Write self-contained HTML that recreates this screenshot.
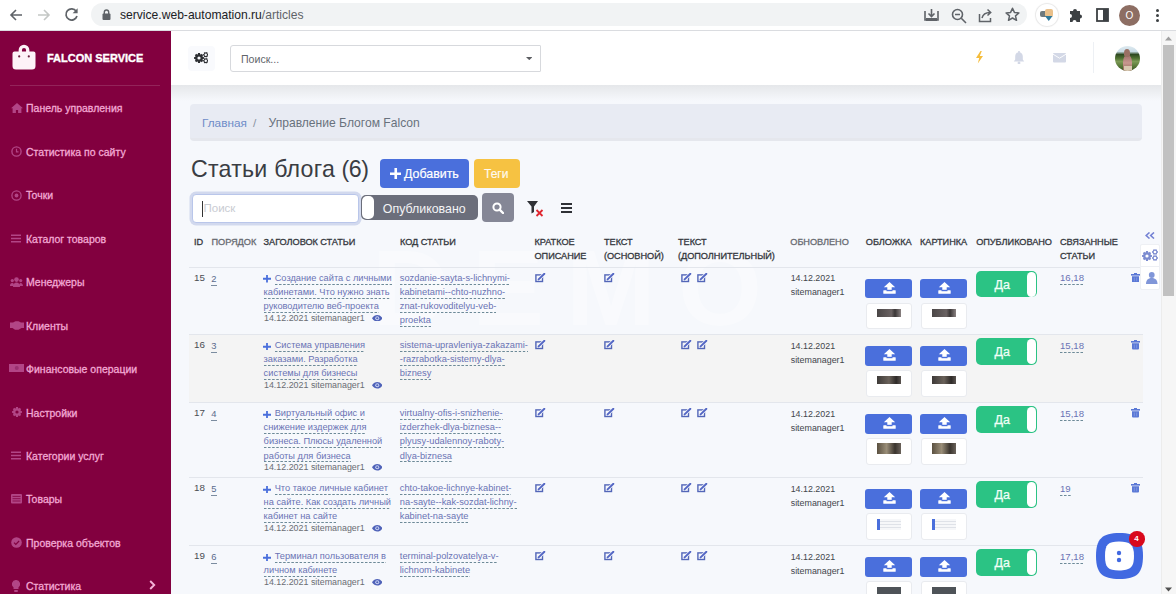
<!DOCTYPE html><html><head><meta charset="utf-8"><style>
*{box-sizing:border-box;margin:0;padding:0}
html,body{width:1176px;height:594px;overflow:hidden;background:#f6f8fc;font-family:"Liberation Sans",sans-serif;position:relative}
.a{position:absolute}
.t{position:absolute;white-space:nowrap}
</style></head><body>
<div class="a" style="left:0px;top:0px;width:1176px;height:31px;background:#fff;border-bottom:1px solid #dadce0"></div>
<div class="a" style="left:91px;top:3px;width:936px;height:23px;background:#f1f3f4;border-radius:12px"></div>
<svg class="a" style="left:9px;top:8px;" width="14" height="14" viewBox="0 0 14 14"><path d="M13 7H2.5M7 2L2 7l5 5" fill="none" stroke="#5f6368" stroke-width="1.6"/></svg>
<svg class="a" style="left:37px;top:8px;" width="14" height="14" viewBox="0 0 14 14"><path d="M1 7h10.5M7 2l5 5-5 5" fill="none" stroke="#c4c7c5" stroke-width="1.6"/></svg>
<svg class="a" style="left:64px;top:7px;" width="15" height="15" viewBox="0 0 15 15"><path d="M12.2 4.2A5.6 5.6 0 1 0 13 9" fill="none" stroke="#5f6368" stroke-width="1.7"/><path d="M13.6 1.2v5h-5z" fill="#5f6368"/></svg>
<svg class="a" style="left:102px;top:9px;" width="9" height="11" viewBox="0 0 9 11"><rect x="0.5" y="4.5" width="8" height="6.5" rx="1" fill="#5f6368"/><path d="M2.3 5V3.2a2.2 2.2 0 0 1 4.4 0V5" fill="none" stroke="#5f6368" stroke-width="1.4"/></svg>
<div class="t" style="left:120px;top:7.55px;font-size:12.1px;line-height:14.52px;color:#202124;font-weight:400;">service.web-automation.ru<span style="color:#5f6368">/articles</span></div>
<svg class="a" style="left:923px;top:8px;" width="17" height="15" viewBox="0 0 17 15"><path d="M2 3v9h13V3" fill="none" stroke="#5f6368" stroke-width="1.6"/><path d="M8.5 1v7M5.5 5.5l3 3 3-3" fill="none" stroke="#5f6368" stroke-width="1.6"/><rect x="3" y="10" width="11" height="3" fill="#5f6368"/></svg>
<svg class="a" style="left:951px;top:8px;" width="16" height="16" viewBox="0 0 16 16"><circle cx="6.5" cy="6.5" r="5" fill="none" stroke="#5f6368" stroke-width="1.6"/><path d="M4 6.5h5M10.3 10.3L15 15" stroke="#5f6368" stroke-width="1.6"/></svg>
<svg class="a" style="left:978px;top:8px;" width="15" height="15" viewBox="0 0 15 15"><path d="M1.5 6v7.5h11V10" fill="none" stroke="#5f6368" stroke-width="1.5"/><path d="M4 10c1-4 4-5.5 8-5.5M9.5 1.5l3.2 3-3.2 3" fill="none" stroke="#5f6368" stroke-width="1.5"/></svg>
<svg class="a" style="left:1005px;top:7px;" width="15" height="15" viewBox="0 0 15 15"><path d="M7.5 1.3l1.9 4.1 4.5.5-3.4 3 1 4.4-4-2.3-4 2.3 1-4.4-3.4-3 4.5-.5z" fill="none" stroke="#5f6368" stroke-width="1.5" stroke-linejoin="round"/></svg>
<div class="a" style="left:1036px;top:4px;width:22px;height:22px;background:#fff;border-radius:50%;box-shadow:0 0 1px 1px #e8e8e8"></div>
<div class="a" style="left:1040px;top:10.5px;width:8px;height:6.5px;background:#6e7a7e;border-radius:2px"></div>
<div class="a" style="left:1045px;top:9px;width:7.5px;height:7.5px;background:#e9c08a;border-radius:2px"></div>
<svg class="a" style="left:1045px;top:16px;" width="7.5" height="5" viewBox="0 0 7.5 5"><path d="M0 0h7.5L3.75 5z" fill="#2f7a9c"/></svg>
<svg class="a" style="left:1067px;top:7px;" width="16" height="16" viewBox="0 0 16 16"><path d="M3 4h3a2 2 0 0 1 4 0h3v3.5a2 2 0 0 1 0 4V15H9.5a2 2 0 0 0-4 0H3V11a2 2 0 0 0 0-4z" fill="#3c4043"/></svg>
<svg class="a" style="left:1096px;top:8px;" width="13" height="14" viewBox="0 0 13 14"><rect x="1" y="1" width="11" height="12" fill="none" stroke="#3c4043" stroke-width="1.8"/><rect x="7" y="1" width="5" height="12" fill="#3c4043"/></svg>
<div class="a" style="left:1119px;top:5px;width:21px;height:21px;background:#8d6e63;border-radius:50%"></div>
<div class="t" style="left:1125.5px;top:10.04px;font-size:10px;line-height:12.0px;color:#fff;font-weight:400;">O</div>
<div class="a" style="left:1156px;top:9px;width:3px;height:3px;background:#3c4043;border-radius:50%"></div>
<div class="a" style="left:1156px;top:14px;width:3px;height:3px;background:#3c4043;border-radius:50%"></div>
<div class="a" style="left:1156px;top:19px;width:3px;height:3px;background:#3c4043;border-radius:50%"></div>
<div class="a" style="left:0px;top:31px;width:171px;height:563px;background:#82003f"></div>
<svg class="a" style="left:12px;top:43px;" width="24" height="28" viewBox="0 0 24 28"><path d="M8.3 10V7a3.7 3.7 0 0 1 7.4 0v3" fill="none" stroke="#fdf2f8" stroke-width="3.3"/><path d="M2.5 8.5h19a2 2 0 0 1 2 2V23a3.5 3.5 0 0 1-3.5 3.5H4A3.5 3.5 0 0 1 .5 23V10.5a2 2 0 0 1 2-2z" fill="#fdf2f8"/><circle cx="7.2" cy="13.4" r="1.1" fill="#6a2040"/><circle cx="16.8" cy="13.4" r="1.1" fill="#6a2040"/></svg>
<div class="t" style="left:47px;top:51.59px;font-size:11px;line-height:13.2px;color:#fff;font-weight:700;letter-spacing:0px;-webkit-text-stroke:0.35px #fff">FALCON SERVICE</div>
<div class="a" style="left:10px;top:85px;width:150px;height:1px;background:rgba(255,255,255,0.14)"></div>
<div class="t" style="left:26px;top:102.16px;font-size:10.5px;line-height:12.6px;color:#f2a8d3;font-weight:400;-webkit-text-stroke:0.3px #f2a8d3">Панель управления</div>
<svg class="a" style="left:10.5px;top:102.6px;" width="12" height="10" viewBox="0 0 12 10"><path d="M6 0L0 5.2h1.6V10h3.3V7h2.2v3h3.3V5.2H12z" fill="#b24586"/></svg>
<div class="t" style="left:26px;top:145.64px;font-size:10.5px;line-height:12.6px;color:#f2a8d3;font-weight:400;-webkit-text-stroke:0.3px #f2a8d3">Статистика по сайту</div>
<svg class="a" style="left:10.5px;top:146.07999999999998px;" width="11" height="11" viewBox="0 0 11 11"><circle cx="5.5" cy="5.5" r="4.6" fill="none" stroke="#b24586" stroke-width="1.4"/><path d="M5.5 2.8v3h2" fill="none" stroke="#b24586" stroke-width="1.2"/></svg>
<div class="t" style="left:26px;top:189.12px;font-size:10.5px;line-height:12.6px;color:#f2a8d3;font-weight:400;-webkit-text-stroke:0.3px #f2a8d3">Точки</div>
<svg class="a" style="left:10.5px;top:189.56px;" width="11" height="11" viewBox="0 0 11 11"><circle cx="5.5" cy="5.5" r="4.6" fill="none" stroke="#b24586" stroke-width="1.3"/><circle cx="5.5" cy="5.5" r="1.9" fill="#b24586"/></svg>
<div class="t" style="left:26px;top:232.60px;font-size:10.5px;line-height:12.6px;color:#f2a8d3;font-weight:400;-webkit-text-stroke:0.3px #f2a8d3">Каталог товаров</div>
<svg class="a" style="left:10.5px;top:234.04px;" width="10" height="9" viewBox="0 0 10 9"><path d="M0 1.2h10M0 4.5h10M0 7.8h10" stroke="#b24586" stroke-width="1.6"/></svg>
<div class="t" style="left:26px;top:276.08px;font-size:10.5px;line-height:12.6px;color:#f2a8d3;font-weight:400;-webkit-text-stroke:0.3px #f2a8d3">Менеджеры</div>
<svg class="a" style="left:10.2px;top:276.71999999999997px;" width="13" height="10" viewBox="0 0 13 10"><circle cx="6.5" cy="2.6" r="2.3" fill="#b24586"/><circle cx="2.3" cy="3.6" r="1.6" fill="#b24586"/><circle cx="10.7" cy="3.6" r="1.6" fill="#b24586"/><path d="M3 10c0-3 1.5-4.5 3.5-4.5S10 7 10 10z" fill="#b24586"/><path d="M0 9c0-2 .8-3 2.3-3S4 7 4 9zM9 9c0-2 .8-3 1.7-3s2.3 1 2.3 3z" fill="#b24586"/></svg>
<div class="t" style="left:26px;top:319.56px;font-size:10.5px;line-height:12.6px;color:#f2a8d3;font-weight:400;-webkit-text-stroke:0.3px #f2a8d3">Клиенты</div>
<svg class="a" style="left:9.5px;top:320.5px;" width="14" height="9" viewBox="0 0 14 9"><path d="M0 1.5h3l2.5-1.2h3L11 1.5h3V7h-2.5L8.5 8.8 5 8.8 2.5 7H0z" fill="#b24586"/></svg>
<div class="t" style="left:26px;top:363.04px;font-size:10.5px;line-height:12.6px;color:#f2a8d3;font-weight:400;-webkit-text-stroke:0.3px #f2a8d3">Финансовые операции</div>
<svg class="a" style="left:8.5px;top:363.98px;" width="15.5" height="8" viewBox="0 0 15.5 8"><rect x="0" y="0" width="15.5" height="8" fill="#b24586"/><circle cx="7.75" cy="4" r="2" fill="#9a3070"/></svg>
<div class="t" style="left:26px;top:406.52px;font-size:10.5px;line-height:12.6px;color:#f2a8d3;font-weight:400;-webkit-text-stroke:0.3px #f2a8d3">Настройки</div>
<svg class="a" style="left:11.5px;top:406.9599999999999px;" width="10" height="10" viewBox="0 0 10 10"><path d="M9.90 3.99L9.90 6.01L8.84 6.12L8.51 6.93L9.18 7.75L7.75 9.18L6.93 8.51L6.12 8.84L6.01 9.90L3.99 9.90L3.88 8.84L3.07 8.51L2.25 9.18L0.82 7.75L1.49 6.93L1.16 6.12L0.10 6.01L0.10 3.99L1.16 3.88L1.49 3.07L0.82 2.25L2.25 0.82L3.07 1.49L3.88 1.16L3.99 0.10L6.01 0.10L6.12 1.16L6.93 1.49L7.75 0.82L9.18 2.25L8.51 3.07L8.84 3.88z" fill="#b24586"/><circle cx="5.0" cy="5.0" r="1.60" fill="#82003f"/></svg>
<div class="t" style="left:26px;top:450.00px;font-size:10.5px;line-height:12.6px;color:#f2a8d3;font-weight:400;-webkit-text-stroke:0.3px #f2a8d3">Категории услуг</div>
<svg class="a" style="left:10.5px;top:451.43999999999994px;" width="10" height="9" viewBox="0 0 10 9"><path d="M0 1.2h10M0 4.5h10M0 7.8h10" stroke="#b24586" stroke-width="1.6"/></svg>
<div class="t" style="left:26px;top:493.48px;font-size:10.5px;line-height:12.6px;color:#f2a8d3;font-weight:400;-webkit-text-stroke:0.3px #f2a8d3">Товары</div>
<svg class="a" style="left:10.5px;top:494.41999999999996px;" width="11" height="9.5" viewBox="0 0 11 9.5"><rect x="0" y="0" width="11" height="9.5" rx="1" fill="#b24586"/><path d="M1.5 2.4h8M1.5 4.7h8M1.5 7h8" stroke="#82003f" stroke-width="0.8"/></svg>
<div class="t" style="left:26px;top:536.96px;font-size:10.5px;line-height:12.6px;color:#f2a8d3;font-weight:400;-webkit-text-stroke:0.3px #f2a8d3">Проверка объектов</div>
<svg class="a" style="left:10.5px;top:537.4px;" width="11" height="11" viewBox="0 0 11 11"><circle cx="5.5" cy="5.5" r="5.3" fill="#b24586"/><path d="M3 5.6l1.8 1.8 3.3-3.4" fill="none" stroke="#82003f" stroke-width="1.2"/></svg>
<div class="t" style="left:26px;top:580.44px;font-size:10.5px;line-height:12.6px;color:#f2a8d3;font-weight:400;-webkit-text-stroke:0.3px #f2a8d3">Статистика</div>
<svg class="a" style="left:12px;top:580.38px;" width="8" height="12" viewBox="0 0 8 12"><path d="M4 0a4 4 0 0 0-2.5 7.2V9h5V7.2A4 4 0 0 0 4 0z" fill="#b24586"/><rect x="2" y="10" width="4" height="2" rx="1" fill="#b24586"/></svg>
<svg class="a" style="left:149px;top:580px;" width="7" height="10" viewBox="0 0 7 10"><path d="M1.2 1l4 4-4 4" fill="none" stroke="#f4b3d8" stroke-width="1.9"/></svg>
<div class="a" style="left:171px;top:85px;width:990px;height:16px;background:linear-gradient(#e5e7ea,#eceef1 40%,#f6f8fc)"></div>
<div class="a" style="left:171px;top:31px;width:990px;height:54px;background:#fff"></div>
<div class="a" style="left:188px;top:46px;width:27px;height:25px;background:#f9fafd;border-radius:4px"></div>
<div class="a" style="left:230px;top:45px;width:311px;height:27px;background:#fff;border:1px solid #d7d9dd;border-radius:3px 1px 1px 3px"></div>
<div class="t" style="left:241px;top:52.77px;font-size:10.6px;line-height:12.72px;color:#62656b;font-weight:400;">Поиск...</div>
<svg class="a" style="left:525.5px;top:56.8px;" width="6.5" height="3.2" viewBox="0 0 6.5 3.2"><path d="M0 0h6.5L3.25 3.2z" fill="#5c5e62"/></svg>
<div class="a" style="left:1161px;top:31px;width:15px;height:563px;background:#f6f6f6;border-left:1px solid #ececec"></div>
<div class="a" style="left:1163px;top:45px;width:11px;height:251px;background:#c1c1c1"></div>
<svg class="a" style="left:1165px;top:36px;" width="7" height="5" viewBox="0 0 7 5"><path d="M0 4.5L3.5 .5 7 4.5z" fill="#a0a0a0"/></svg>
<svg class="a" style="left:1165px;top:587px;" width="7" height="5" viewBox="0 0 7 5"><path d="M0 .5L3.5 4.5 7 .5z" fill="#505050"/></svg>
<div class="a" style="left:190px;top:104px;width:952px;height:37px;background:#e8ebf3;border-bottom:3px solid #e5e7ed;border-radius:4px"></div>
<div class="t" style="left:202px;top:116.13px;font-size:11.8px;line-height:14.16px;color:#6e8bc8;font-weight:400;">Главная</div>
<div class="t" style="left:253px;top:116.13px;font-size:11.8px;line-height:14.16px;color:#8a94a2;font-weight:400;">/</div>
<div class="t" style="left:268.5px;top:115.85px;font-size:12.1px;line-height:14.52px;color:#68727d;font-weight:400;">Управление Блогом Falcon</div>
<div class="t" style="left:191px;top:156.44px;font-size:23.2px;line-height:27.84px;color:#3a3d43;font-weight:400;letter-spacing:0.22px">Статьи блога</div>
<div class="t" style="left:341.6px;top:156.44px;font-size:23.2px;line-height:27.84px;color:#3a3d43;font-weight:400;letter-spacing:-0.5px">(6)</div>
<div class="a" style="left:380px;top:158.5px;width:89px;height:29px;background:#4a6fdc;border-radius:4px"></div>
<div class="t" style="left:404px;top:166.96px;font-size:12.4px;line-height:14.88px;color:#fff;font-weight:400;-webkit-text-stroke:0.2px #fff">Добавить</div>
<div class="a" style="left:473.5px;top:158.5px;width:46px;height:29px;background:#f6c242;border-radius:4px"></div>
<div class="t" style="left:484px;top:166.64px;font-size:12px;line-height:14.4px;color:#fffaf0;font-weight:400;-webkit-text-stroke:0.15px #fffaf0">Теги</div>
<div class="a" style="left:192px;top:194px;width:167px;height:29px;background:#fff;border:1px solid #b9c6ea;box-shadow:0 0 0 2.5px #d2d9ee;border-radius:4px"></div>
<div class="a" style="left:361px;top:195px;width:117px;height:25px;background:#6b6e7b;border-radius:5px"></div>
<div class="a" style="left:362px;top:196px;width:12px;height:23px;background:#fff;border-radius:5px"></div>
<div class="t" style="left:382.8px;top:201.76px;font-size:12.4px;line-height:14.88px;color:#f4f4f6;font-weight:400;">Опубликовано</div>
<div class="a" style="left:481.5px;top:193px;width:32.5px;height:29px;background:#858796;border-radius:4px"></div>
<div class="t" style="left:372px;top:222.78px;font-size:108px;line-height:129.6px;color:rgba(255,255,255,0.32);font-weight:700;letter-spacing:22px">DEMO</div>
<div class="t" style="left:194px;top:236.69px;font-size:9.2px;line-height:11.04px;color:#35383e;font-weight:400;letter-spacing:-0.05px;-webkit-text-stroke:0.3px #35383e">ID</div>
<div class="t" style="left:211.5px;top:236.69px;font-size:9.2px;line-height:11.04px;color:#686b72;font-weight:400;letter-spacing:-0.05px;-webkit-text-stroke:0.3px #686b72">ПОРЯДОК</div>
<div class="t" style="left:263.6px;top:236.69px;font-size:9.2px;line-height:11.04px;color:#35383e;font-weight:400;letter-spacing:-0.05px;-webkit-text-stroke:0.3px #35383e">ЗАГОЛОВОК СТАТЬИ</div>
<div class="t" style="left:400px;top:236.69px;font-size:9.2px;line-height:11.04px;color:#35383e;font-weight:400;letter-spacing:-0.05px;-webkit-text-stroke:0.3px #35383e">КОД СТАТЬИ</div>
<div class="t" style="left:534.5px;top:236.69px;font-size:9.2px;line-height:11.04px;color:#35383e;font-weight:400;letter-spacing:-0.05px;-webkit-text-stroke:0.3px #35383e">КРАТКОЕ</div>
<div class="t" style="left:534.5px;top:251.29px;font-size:9.2px;line-height:11.04px;color:#35383e;font-weight:400;letter-spacing:-0.05px;-webkit-text-stroke:0.3px #35383e">ОПИСАНИЕ</div>
<div class="t" style="left:604px;top:236.69px;font-size:9.2px;line-height:11.04px;color:#35383e;font-weight:400;letter-spacing:-0.05px;-webkit-text-stroke:0.3px #35383e">ТЕКСТ</div>
<div class="t" style="left:604px;top:251.29px;font-size:9.2px;line-height:11.04px;color:#35383e;font-weight:400;letter-spacing:-0.05px;-webkit-text-stroke:0.3px #35383e">(ОСНОВНОЙ)</div>
<div class="t" style="left:678px;top:236.69px;font-size:9.2px;line-height:11.04px;color:#35383e;font-weight:400;letter-spacing:-0.05px;-webkit-text-stroke:0.3px #35383e">ТЕКСТ</div>
<div class="t" style="left:678px;top:251.29px;font-size:9.2px;line-height:11.04px;color:#35383e;font-weight:400;letter-spacing:-0.05px;-webkit-text-stroke:0.3px #35383e">(ДОПОЛНИТЕЛЬНЫЙ)</div>
<div class="t" style="left:790.3px;top:236.69px;font-size:9.2px;line-height:11.04px;color:#686b72;font-weight:400;letter-spacing:-0.05px;-webkit-text-stroke:0.3px #686b72">ОБНОВЛЕНО</div>
<div class="t" style="left:865.8px;top:236.69px;font-size:9.2px;line-height:11.04px;color:#35383e;font-weight:400;letter-spacing:-0.05px;-webkit-text-stroke:0.3px #35383e">ОБЛОЖКА</div>
<div class="t" style="left:920px;top:236.69px;font-size:9.2px;line-height:11.04px;color:#35383e;font-weight:400;letter-spacing:-0.05px;-webkit-text-stroke:0.3px #35383e">КАРТИНКА</div>
<div class="t" style="left:976.2px;top:236.69px;font-size:9.2px;line-height:11.04px;color:#35383e;font-weight:400;letter-spacing:-0.05px;-webkit-text-stroke:0.3px #35383e">ОПУБЛИКОВАНО</div>
<div class="t" style="left:1060px;top:236.69px;font-size:9.2px;line-height:11.04px;color:#35383e;font-weight:400;letter-spacing:-0.05px;-webkit-text-stroke:0.3px #35383e">СВЯЗАННЫЕ</div>
<div class="t" style="left:1060px;top:251.29px;font-size:9.2px;line-height:11.04px;color:#35383e;font-weight:400;letter-spacing:-0.05px;-webkit-text-stroke:0.3px #35383e">СТАТЬИ</div>
<div class="a" style="left:189px;top:266.5px;width:954px;height:1px;background:#e3e6ec"></div>
<div class="a" style="left:189px;top:333.5px;width:954px;height:1px;background:#e3e6ec"></div>
<div class="t" style="left:194px;top:271.72px;font-size:9.8px;line-height:11.76px;color:#4a4d53;font-weight:400;">15</div>
<div class="t" style="left:211.3px;top:272.60px;font-size:9.4px;line-height:11.28px;color:#5b6b8c;font-weight:400;"><span style="border-bottom:1.5px solid #7b8ca0;padding-bottom:1px">2</span></div>
<svg class="a" style="left:263.4px;top:275.2px;" width="8" height="7.5" viewBox="0 0 8 7.5"><path d="M4 0v7.5M0 3.75h8" stroke="#4a6fdc" stroke-width="1.8"/></svg>
<div class="t" style="left:274.7px;top:272.74px;font-size:9.25px;line-height:11.1px;color:#6a73b4;font-weight:400;"><span style="background:linear-gradient(to right,#6d8a98 52%,transparent 0) repeat-x 0 100%/4.1px 1.2px;padding-bottom:2px">Создание сайта с личными</span></div>
<div class="t" style="left:263.6px;top:286.84px;font-size:9.25px;line-height:11.1px;color:#6a73b4;font-weight:400;"><span style="background:linear-gradient(to right,#6d8a98 52%,transparent 0) repeat-x 0 100%/4.1px 1.2px;padding-bottom:2px">кабинетами. Что нужно знать</span></div>
<div class="t" style="left:263.6px;top:300.94px;font-size:9.25px;line-height:11.1px;color:#6a73b4;font-weight:400;"><span style="background:linear-gradient(to right,#6d8a98 52%,transparent 0) repeat-x 0 100%/4.1px 1.2px;padding-bottom:2px">руководителю веб-проекта</span></div>
<div class="t" style="left:264px;top:312.58px;font-size:8.9px;line-height:10.68px;color:#6a6d73;font-weight:400;">14.12.2021 sitemanager1</div>
<svg class="a" style="left:371.5px;top:314.8px;" width="10.5" height="6.5" viewBox="0 0 10.5 6.5"><path d="M0 3.25C1.5 1 3.3 0 5.25 0S9 1 10.5 3.25C9 5.5 7.2 6.5 5.25 6.5S1.5 5.5 0 3.25z" fill="#4f62b8"/><circle cx="5.25" cy="3.25" r="2" fill="#c8d2f4"/><circle cx="5.25" cy="3.25" r="1.1" fill="#4f62b8"/></svg>
<div class="t" style="left:399.8px;top:272.70px;font-size:9.3px;line-height:11.16px;color:#6a73b4;font-weight:400;"><span style="background:linear-gradient(to right,#6d8a98 52%,transparent 0) repeat-x 0 100%/4.1px 1.2px;padding-bottom:2px">sozdanie-sayta-s-lichnymi-</span></div>
<div class="t" style="left:399.8px;top:286.80px;font-size:9.3px;line-height:11.16px;color:#6a73b4;font-weight:400;"><span style="background:linear-gradient(to right,#6d8a98 52%,transparent 0) repeat-x 0 100%/4.1px 1.2px;padding-bottom:2px">kabinetami--chto-nuzhno-</span></div>
<div class="t" style="left:399.8px;top:300.90px;font-size:9.3px;line-height:11.16px;color:#6a73b4;font-weight:400;"><span style="background:linear-gradient(to right,#6d8a98 52%,transparent 0) repeat-x 0 100%/4.1px 1.2px;padding-bottom:2px">znat-rukovoditelyu-veb-</span></div>
<div class="t" style="left:399.8px;top:315.00px;font-size:9.3px;line-height:11.16px;color:#6a73b4;font-weight:400;"><span style="background:linear-gradient(to right,#6d8a98 52%,transparent 0) repeat-x 0 100%/4.1px 1.2px;padding-bottom:2px">proekta</span></div>
<svg class="a" style="left:534.8px;top:272.8px;" width="11" height="10" viewBox="0 0 11 10"><rect x="0.9" y="1.9" width="6.6" height="6.6" fill="none" stroke="#5366b8" stroke-width="1.4"/><path d="M3.6 6.4L9.6 0.6" stroke="#f6f8fc" stroke-width="3.4"/><path d="M3.6 6.4L9.4 0.8" stroke="#5366c4" stroke-width="1.9" stroke-linecap="round"/></svg>
<svg class="a" style="left:603.9px;top:272.8px;" width="11" height="10" viewBox="0 0 11 10"><rect x="0.9" y="1.9" width="6.6" height="6.6" fill="none" stroke="#5366b8" stroke-width="1.4"/><path d="M3.6 6.4L9.6 0.6" stroke="#f6f8fc" stroke-width="3.4"/><path d="M3.6 6.4L9.4 0.8" stroke="#5366c4" stroke-width="1.9" stroke-linecap="round"/></svg>
<svg class="a" style="left:680.7px;top:272.8px;" width="11" height="10" viewBox="0 0 11 10"><rect x="0.9" y="1.9" width="6.6" height="6.6" fill="none" stroke="#5366b8" stroke-width="1.4"/><path d="M3.6 6.4L9.6 0.6" stroke="#f6f8fc" stroke-width="3.4"/><path d="M3.6 6.4L9.4 0.8" stroke="#5366c4" stroke-width="1.9" stroke-linecap="round"/></svg>
<svg class="a" style="left:697.3px;top:272.8px;" width="11" height="10" viewBox="0 0 11 10"><rect x="0.9" y="1.9" width="6.6" height="6.6" fill="none" stroke="#5366b8" stroke-width="1.4"/><path d="M3.6 6.4L9.6 0.6" stroke="#f6f8fc" stroke-width="3.4"/><path d="M3.6 6.4L9.4 0.8" stroke="#5366c4" stroke-width="1.9" stroke-linecap="round"/></svg>
<div class="t" style="left:790.7px;top:273.08px;font-size:8.9px;line-height:10.68px;color:#43464c;font-weight:400;">14.12.2021</div>
<div class="t" style="left:790.7px;top:287.38px;font-size:8.9px;line-height:10.68px;color:#43464c;font-weight:400;">sitemanager1</div>
<div class="a" style="left:865.4px;top:278.6px;width:47px;height:19.5px;background:#4a6fdc;border-radius:3px"></div>
<svg class="a" style="left:882.9px;top:281.8px;" width="13" height="12" viewBox="0 0 13 12"><path d="M6.5 0L12.2 5.3H8.7v4.2H4.3V5.3H.8z" fill="#fff"/><rect x="0.3" y="8.3" width="12.4" height="3.4" rx=".5" fill="#fff"/><rect x="3.5" y="7.8" width="6" height="1.4" fill="#4a6fdc"/></svg>
<div class="a" style="left:865.9px;top:302.8px;width:46px;height:26.5px;background:#fff;border:1px solid #e9ebef;border-radius:3px"></div>
<div class="a" style="left:877.4px;top:308.5px;width:24px;height:8px;background:linear-gradient(90deg,#4a4646,#6a6262 60%,#3a3636 75%,#8a8282)"></div>
<div class="a" style="left:920px;top:278.6px;width:47px;height:19.5px;background:#4a6fdc;border-radius:3px"></div>
<svg class="a" style="left:937.5px;top:281.8px;" width="13" height="12" viewBox="0 0 13 12"><path d="M6.5 0L12.2 5.3H8.7v4.2H4.3V5.3H.8z" fill="#fff"/><rect x="0.3" y="8.3" width="12.4" height="3.4" rx=".5" fill="#fff"/><rect x="3.5" y="7.8" width="6" height="1.4" fill="#4a6fdc"/></svg>
<div class="a" style="left:920.5px;top:302.8px;width:46px;height:26.5px;background:#fff;border:1px solid #e9ebef;border-radius:3px"></div>
<div class="a" style="left:932px;top:308.5px;width:24px;height:8px;background:linear-gradient(90deg,#4a4646,#6a6262 60%,#3a3636 75%,#8a8282)"></div>
<div class="a" style="left:975.8px;top:270.8px;width:61.6px;height:26.7px;background:#2bc384;border-radius:5px"></div>
<div class="a" style="left:1026.5px;top:271.7px;width:9.7px;height:25px;background:#fff;border-radius:5px"></div>
<div class="t" style="left:994.5px;top:277.67px;font-size:12.5px;line-height:15.0px;color:#f2fff8;font-weight:400;-webkit-text-stroke:0.25px #f2fff8">Да</div>
<div class="t" style="left:1060px;top:272.41px;font-size:9.6px;line-height:11.52px;color:#6a73b4;font-weight:400;"><span style="background:linear-gradient(to right,#6d8a98 52%,transparent 0) repeat-x 0 100%/4.1px 1.2px;padding-bottom:2px">16,18</span></div>
<svg class="a" style="left:1130.8px;top:272.7px;" width="9" height="9.5" viewBox="0 0 9 9.5"><rect x="0" y="1" width="9" height="1.6" fill="#5a78d6"/><rect x="3" y="0" width="3" height="1.5" fill="#5a78d6"/><path d="M1 3.2h7v5.3a1 1 0 0 1-1 1H2a1 1 0 0 1-1-1z" fill="#5a78d6"/><path d="M3.3 4.5v3.8M5.7 4.5v3.8" stroke="#8aa0e6" stroke-width="0.7"/></svg>
<div class="a" style="left:189px;top:334.5px;width:954px;height:67.5px;background:#f4f4f4"></div>
<div class="a" style="left:189px;top:401.5px;width:954px;height:1px;background:#e3e6ec"></div>
<div class="t" style="left:194px;top:339.22px;font-size:9.8px;line-height:11.76px;color:#4a4d53;font-weight:400;">16</div>
<div class="t" style="left:211.3px;top:340.10px;font-size:9.4px;line-height:11.28px;color:#5b6b8c;font-weight:400;"><span style="border-bottom:1.5px solid #7b8ca0;padding-bottom:1px">3</span></div>
<svg class="a" style="left:263.4px;top:342.7px;" width="8" height="7.5" viewBox="0 0 8 7.5"><path d="M4 0v7.5M0 3.75h8" stroke="#4a6fdc" stroke-width="1.8"/></svg>
<div class="t" style="left:274.7px;top:340.24px;font-size:9.25px;line-height:11.1px;color:#6a73b4;font-weight:400;"><span style="background:linear-gradient(to right,#6d8a98 52%,transparent 0) repeat-x 0 100%/4.1px 1.2px;padding-bottom:2px">Система управления</span></div>
<div class="t" style="left:263.6px;top:354.34px;font-size:9.25px;line-height:11.1px;color:#6a73b4;font-weight:400;"><span style="background:linear-gradient(to right,#6d8a98 52%,transparent 0) repeat-x 0 100%/4.1px 1.2px;padding-bottom:2px">заказами. Разработка</span></div>
<div class="t" style="left:263.6px;top:368.44px;font-size:9.25px;line-height:11.1px;color:#6a73b4;font-weight:400;"><span style="background:linear-gradient(to right,#6d8a98 52%,transparent 0) repeat-x 0 100%/4.1px 1.2px;padding-bottom:2px">системы для бизнесы</span></div>
<div class="t" style="left:264px;top:380.08px;font-size:8.9px;line-height:10.68px;color:#6a6d73;font-weight:400;">14.12.2021 sitemanager1</div>
<svg class="a" style="left:371.5px;top:382.3px;" width="10.5" height="6.5" viewBox="0 0 10.5 6.5"><path d="M0 3.25C1.5 1 3.3 0 5.25 0S9 1 10.5 3.25C9 5.5 7.2 6.5 5.25 6.5S1.5 5.5 0 3.25z" fill="#4f62b8"/><circle cx="5.25" cy="3.25" r="2" fill="#c8d2f4"/><circle cx="5.25" cy="3.25" r="1.1" fill="#4f62b8"/></svg>
<div class="t" style="left:399.8px;top:340.20px;font-size:9.3px;line-height:11.16px;color:#6a73b4;font-weight:400;"><span style="background:linear-gradient(to right,#6d8a98 52%,transparent 0) repeat-x 0 100%/4.1px 1.2px;padding-bottom:2px">sistema-upravleniya-zakazami-</span></div>
<div class="t" style="left:399.8px;top:354.30px;font-size:9.3px;line-height:11.16px;color:#6a73b4;font-weight:400;"><span style="background:linear-gradient(to right,#6d8a98 52%,transparent 0) repeat-x 0 100%/4.1px 1.2px;padding-bottom:2px">-razrabotka-sistemy-dlya-</span></div>
<div class="t" style="left:399.8px;top:368.40px;font-size:9.3px;line-height:11.16px;color:#6a73b4;font-weight:400;"><span style="background:linear-gradient(to right,#6d8a98 52%,transparent 0) repeat-x 0 100%/4.1px 1.2px;padding-bottom:2px">biznesy</span></div>
<svg class="a" style="left:534.8px;top:340.3px;" width="11" height="10" viewBox="0 0 11 10"><rect x="0.9" y="1.9" width="6.6" height="6.6" fill="none" stroke="#5366b8" stroke-width="1.4"/><path d="M3.6 6.4L9.6 0.6" stroke="#f6f8fc" stroke-width="3.4"/><path d="M3.6 6.4L9.4 0.8" stroke="#5366c4" stroke-width="1.9" stroke-linecap="round"/></svg>
<svg class="a" style="left:603.9px;top:340.3px;" width="11" height="10" viewBox="0 0 11 10"><rect x="0.9" y="1.9" width="6.6" height="6.6" fill="none" stroke="#5366b8" stroke-width="1.4"/><path d="M3.6 6.4L9.6 0.6" stroke="#f6f8fc" stroke-width="3.4"/><path d="M3.6 6.4L9.4 0.8" stroke="#5366c4" stroke-width="1.9" stroke-linecap="round"/></svg>
<svg class="a" style="left:680.7px;top:340.3px;" width="11" height="10" viewBox="0 0 11 10"><rect x="0.9" y="1.9" width="6.6" height="6.6" fill="none" stroke="#5366b8" stroke-width="1.4"/><path d="M3.6 6.4L9.6 0.6" stroke="#f6f8fc" stroke-width="3.4"/><path d="M3.6 6.4L9.4 0.8" stroke="#5366c4" stroke-width="1.9" stroke-linecap="round"/></svg>
<svg class="a" style="left:697.3px;top:340.3px;" width="11" height="10" viewBox="0 0 11 10"><rect x="0.9" y="1.9" width="6.6" height="6.6" fill="none" stroke="#5366b8" stroke-width="1.4"/><path d="M3.6 6.4L9.6 0.6" stroke="#f6f8fc" stroke-width="3.4"/><path d="M3.6 6.4L9.4 0.8" stroke="#5366c4" stroke-width="1.9" stroke-linecap="round"/></svg>
<div class="t" style="left:790.7px;top:340.58px;font-size:8.9px;line-height:10.68px;color:#43464c;font-weight:400;">14.12.2021</div>
<div class="t" style="left:790.7px;top:354.88px;font-size:8.9px;line-height:10.68px;color:#43464c;font-weight:400;">sitemanager1</div>
<div class="a" style="left:865.4px;top:346.1px;width:47px;height:19.5px;background:#4a6fdc;border-radius:3px"></div>
<svg class="a" style="left:882.9px;top:349.3px;" width="13" height="12" viewBox="0 0 13 12"><path d="M6.5 0L12.2 5.3H8.7v4.2H4.3V5.3H.8z" fill="#fff"/><rect x="0.3" y="8.3" width="12.4" height="3.4" rx=".5" fill="#fff"/><rect x="3.5" y="7.8" width="6" height="1.4" fill="#4a6fdc"/></svg>
<div class="a" style="left:865.9px;top:370.3px;width:46px;height:26.5px;background:#fff;border:1px solid #e9ebef;border-radius:3px"></div>
<div class="a" style="left:877.4px;top:376px;width:24px;height:8px;background:linear-gradient(90deg,#3e3a38,#6a625a 50%,#2e2a28 80%,#5a5450)"></div>
<div class="a" style="left:920px;top:346.1px;width:47px;height:19.5px;background:#4a6fdc;border-radius:3px"></div>
<svg class="a" style="left:937.5px;top:349.3px;" width="13" height="12" viewBox="0 0 13 12"><path d="M6.5 0L12.2 5.3H8.7v4.2H4.3V5.3H.8z" fill="#fff"/><rect x="0.3" y="8.3" width="12.4" height="3.4" rx=".5" fill="#fff"/><rect x="3.5" y="7.8" width="6" height="1.4" fill="#4a6fdc"/></svg>
<div class="a" style="left:920.5px;top:370.3px;width:46px;height:26.5px;background:#fff;border:1px solid #e9ebef;border-radius:3px"></div>
<div class="a" style="left:932px;top:376px;width:24px;height:8px;background:linear-gradient(90deg,#3e3a38,#6a625a 50%,#2e2a28 80%,#5a5450)"></div>
<div class="a" style="left:975.8px;top:338.3px;width:61.6px;height:26.7px;background:#2bc384;border-radius:5px"></div>
<div class="a" style="left:1026.5px;top:339.2px;width:9.7px;height:25px;background:#fff;border-radius:5px"></div>
<div class="t" style="left:994.5px;top:345.17px;font-size:12.5px;line-height:15.0px;color:#f2fff8;font-weight:400;-webkit-text-stroke:0.25px #f2fff8">Да</div>
<div class="t" style="left:1060px;top:339.91px;font-size:9.6px;line-height:11.52px;color:#6a73b4;font-weight:400;"><span style="background:linear-gradient(to right,#6d8a98 52%,transparent 0) repeat-x 0 100%/4.1px 1.2px;padding-bottom:2px">15,18</span></div>
<svg class="a" style="left:1130.8px;top:340.2px;" width="9" height="9.5" viewBox="0 0 9 9.5"><rect x="0" y="1" width="9" height="1.6" fill="#5a78d6"/><rect x="3" y="0" width="3" height="1.5" fill="#5a78d6"/><path d="M1 3.2h7v5.3a1 1 0 0 1-1 1H2a1 1 0 0 1-1-1z" fill="#5a78d6"/><path d="M3.3 4.5v3.8M5.7 4.5v3.8" stroke="#8aa0e6" stroke-width="0.7"/></svg>
<div class="a" style="left:189px;top:476.5px;width:954px;height:1px;background:#e3e6ec"></div>
<div class="t" style="left:194px;top:407.22px;font-size:9.8px;line-height:11.76px;color:#4a4d53;font-weight:400;">17</div>
<div class="t" style="left:211.3px;top:408.10px;font-size:9.4px;line-height:11.28px;color:#5b6b8c;font-weight:400;"><span style="border-bottom:1.5px solid #7b8ca0;padding-bottom:1px">4</span></div>
<svg class="a" style="left:263.4px;top:410.7px;" width="8" height="7.5" viewBox="0 0 8 7.5"><path d="M4 0v7.5M0 3.75h8" stroke="#4a6fdc" stroke-width="1.8"/></svg>
<div class="t" style="left:274.7px;top:408.24px;font-size:9.25px;line-height:11.1px;color:#6a73b4;font-weight:400;"><span style="background:linear-gradient(to right,#6d8a98 52%,transparent 0) repeat-x 0 100%/4.1px 1.2px;padding-bottom:2px">Виртуальный офис и</span></div>
<div class="t" style="left:263.6px;top:422.34px;font-size:9.25px;line-height:11.1px;color:#6a73b4;font-weight:400;"><span style="background:linear-gradient(to right,#6d8a98 52%,transparent 0) repeat-x 0 100%/4.1px 1.2px;padding-bottom:2px">снижение издержек для</span></div>
<div class="t" style="left:263.6px;top:436.44px;font-size:9.25px;line-height:11.1px;color:#6a73b4;font-weight:400;"><span style="background:linear-gradient(to right,#6d8a98 52%,transparent 0) repeat-x 0 100%/4.1px 1.2px;padding-bottom:2px">бизнеса. Плюсы удаленной</span></div>
<div class="t" style="left:263.6px;top:450.54px;font-size:9.25px;line-height:11.1px;color:#6a73b4;font-weight:400;"><span style="background:linear-gradient(to right,#6d8a98 52%,transparent 0) repeat-x 0 100%/4.1px 1.2px;padding-bottom:2px">работы для бизнеса</span></div>
<div class="t" style="left:264px;top:462.18px;font-size:8.9px;line-height:10.68px;color:#6a6d73;font-weight:400;">14.12.2021 sitemanager1</div>
<svg class="a" style="left:371.5px;top:464.40000000000003px;" width="10.5" height="6.5" viewBox="0 0 10.5 6.5"><path d="M0 3.25C1.5 1 3.3 0 5.25 0S9 1 10.5 3.25C9 5.5 7.2 6.5 5.25 6.5S1.5 5.5 0 3.25z" fill="#4f62b8"/><circle cx="5.25" cy="3.25" r="2" fill="#c8d2f4"/><circle cx="5.25" cy="3.25" r="1.1" fill="#4f62b8"/></svg>
<div class="t" style="left:399.8px;top:408.20px;font-size:9.3px;line-height:11.16px;color:#6a73b4;font-weight:400;"><span style="background:linear-gradient(to right,#6d8a98 52%,transparent 0) repeat-x 0 100%/4.1px 1.2px;padding-bottom:2px">virtualny-ofis-i-snizhenie-</span></div>
<div class="t" style="left:399.8px;top:422.30px;font-size:9.3px;line-height:11.16px;color:#6a73b4;font-weight:400;"><span style="background:linear-gradient(to right,#6d8a98 52%,transparent 0) repeat-x 0 100%/4.1px 1.2px;padding-bottom:2px">izderzhek-dlya-biznesa--</span></div>
<div class="t" style="left:399.8px;top:436.40px;font-size:9.3px;line-height:11.16px;color:#6a73b4;font-weight:400;"><span style="background:linear-gradient(to right,#6d8a98 52%,transparent 0) repeat-x 0 100%/4.1px 1.2px;padding-bottom:2px">plyusy-udalennoy-raboty-</span></div>
<div class="t" style="left:399.8px;top:450.50px;font-size:9.3px;line-height:11.16px;color:#6a73b4;font-weight:400;"><span style="background:linear-gradient(to right,#6d8a98 52%,transparent 0) repeat-x 0 100%/4.1px 1.2px;padding-bottom:2px">dlya-biznesa</span></div>
<svg class="a" style="left:534.8px;top:408.3px;" width="11" height="10" viewBox="0 0 11 10"><rect x="0.9" y="1.9" width="6.6" height="6.6" fill="none" stroke="#5366b8" stroke-width="1.4"/><path d="M3.6 6.4L9.6 0.6" stroke="#f6f8fc" stroke-width="3.4"/><path d="M3.6 6.4L9.4 0.8" stroke="#5366c4" stroke-width="1.9" stroke-linecap="round"/></svg>
<svg class="a" style="left:603.9px;top:408.3px;" width="11" height="10" viewBox="0 0 11 10"><rect x="0.9" y="1.9" width="6.6" height="6.6" fill="none" stroke="#5366b8" stroke-width="1.4"/><path d="M3.6 6.4L9.6 0.6" stroke="#f6f8fc" stroke-width="3.4"/><path d="M3.6 6.4L9.4 0.8" stroke="#5366c4" stroke-width="1.9" stroke-linecap="round"/></svg>
<svg class="a" style="left:680.7px;top:408.3px;" width="11" height="10" viewBox="0 0 11 10"><rect x="0.9" y="1.9" width="6.6" height="6.6" fill="none" stroke="#5366b8" stroke-width="1.4"/><path d="M3.6 6.4L9.6 0.6" stroke="#f6f8fc" stroke-width="3.4"/><path d="M3.6 6.4L9.4 0.8" stroke="#5366c4" stroke-width="1.9" stroke-linecap="round"/></svg>
<svg class="a" style="left:697.3px;top:408.3px;" width="11" height="10" viewBox="0 0 11 10"><rect x="0.9" y="1.9" width="6.6" height="6.6" fill="none" stroke="#5366b8" stroke-width="1.4"/><path d="M3.6 6.4L9.6 0.6" stroke="#f6f8fc" stroke-width="3.4"/><path d="M3.6 6.4L9.4 0.8" stroke="#5366c4" stroke-width="1.9" stroke-linecap="round"/></svg>
<div class="t" style="left:790.7px;top:408.58px;font-size:8.9px;line-height:10.68px;color:#43464c;font-weight:400;">14.12.2021</div>
<div class="t" style="left:790.7px;top:422.88px;font-size:8.9px;line-height:10.68px;color:#43464c;font-weight:400;">sitemanager1</div>
<div class="a" style="left:865.4px;top:414.1px;width:47px;height:19.5px;background:#4a6fdc;border-radius:3px"></div>
<svg class="a" style="left:882.9px;top:417.3px;" width="13" height="12" viewBox="0 0 13 12"><path d="M6.5 0L12.2 5.3H8.7v4.2H4.3V5.3H.8z" fill="#fff"/><rect x="0.3" y="8.3" width="12.4" height="3.4" rx=".5" fill="#fff"/><rect x="3.5" y="7.8" width="6" height="1.4" fill="#4a6fdc"/></svg>
<div class="a" style="left:865.9px;top:438.3px;width:46px;height:26.5px;background:#fff;border:1px solid #e9ebef;border-radius:3px"></div>
<div class="a" style="left:877.4px;top:444px;width:24px;height:8px;background:linear-gradient(90deg,#5a5040,#9a8e78 40%,#3a342e 75%,#6a625a);height:10.5px;margin-top:-1px"></div>
<div class="a" style="left:920px;top:414.1px;width:47px;height:19.5px;background:#4a6fdc;border-radius:3px"></div>
<svg class="a" style="left:937.5px;top:417.3px;" width="13" height="12" viewBox="0 0 13 12"><path d="M6.5 0L12.2 5.3H8.7v4.2H4.3V5.3H.8z" fill="#fff"/><rect x="0.3" y="8.3" width="12.4" height="3.4" rx=".5" fill="#fff"/><rect x="3.5" y="7.8" width="6" height="1.4" fill="#4a6fdc"/></svg>
<div class="a" style="left:920.5px;top:438.3px;width:46px;height:26.5px;background:#fff;border:1px solid #e9ebef;border-radius:3px"></div>
<div class="a" style="left:932px;top:444px;width:24px;height:8px;background:linear-gradient(90deg,#5a5040,#9a8e78 40%,#3a342e 75%,#6a625a);height:10.5px;margin-top:-1px"></div>
<div class="a" style="left:975.8px;top:406.3px;width:61.6px;height:26.7px;background:#2bc384;border-radius:5px"></div>
<div class="a" style="left:1026.5px;top:407.2px;width:9.7px;height:25px;background:#fff;border-radius:5px"></div>
<div class="t" style="left:994.5px;top:413.17px;font-size:12.5px;line-height:15.0px;color:#f2fff8;font-weight:400;-webkit-text-stroke:0.25px #f2fff8">Да</div>
<div class="t" style="left:1060px;top:407.91px;font-size:9.6px;line-height:11.52px;color:#6a73b4;font-weight:400;"><span style="background:linear-gradient(to right,#6d8a98 52%,transparent 0) repeat-x 0 100%/4.1px 1.2px;padding-bottom:2px">15,18</span></div>
<svg class="a" style="left:1130.8px;top:408.2px;" width="9" height="9.5" viewBox="0 0 9 9.5"><rect x="0" y="1" width="9" height="1.6" fill="#5a78d6"/><rect x="3" y="0" width="3" height="1.5" fill="#5a78d6"/><path d="M1 3.2h7v5.3a1 1 0 0 1-1 1H2a1 1 0 0 1-1-1z" fill="#5a78d6"/><path d="M3.3 4.5v3.8M5.7 4.5v3.8" stroke="#8aa0e6" stroke-width="0.7"/></svg>
<div class="a" style="left:189px;top:544.5px;width:954px;height:1px;background:#e3e6ec"></div>
<div class="t" style="left:194px;top:482.22px;font-size:9.8px;line-height:11.76px;color:#4a4d53;font-weight:400;">18</div>
<div class="t" style="left:211.3px;top:483.10px;font-size:9.4px;line-height:11.28px;color:#5b6b8c;font-weight:400;"><span style="border-bottom:1.5px solid #7b8ca0;padding-bottom:1px">5</span></div>
<svg class="a" style="left:263.4px;top:485.7px;" width="8" height="7.5" viewBox="0 0 8 7.5"><path d="M4 0v7.5M0 3.75h8" stroke="#4a6fdc" stroke-width="1.8"/></svg>
<div class="t" style="left:274.7px;top:483.24px;font-size:9.25px;line-height:11.1px;color:#6a73b4;font-weight:400;"><span style="background:linear-gradient(to right,#6d8a98 52%,transparent 0) repeat-x 0 100%/4.1px 1.2px;padding-bottom:2px">Что такое личные кабинет</span></div>
<div class="t" style="left:263.6px;top:497.34px;font-size:9.25px;line-height:11.1px;color:#6a73b4;font-weight:400;"><span style="background:linear-gradient(to right,#6d8a98 52%,transparent 0) repeat-x 0 100%/4.1px 1.2px;padding-bottom:2px">на сайте. Как создать личный</span></div>
<div class="t" style="left:263.6px;top:511.44px;font-size:9.25px;line-height:11.1px;color:#6a73b4;font-weight:400;"><span style="background:linear-gradient(to right,#6d8a98 52%,transparent 0) repeat-x 0 100%/4.1px 1.2px;padding-bottom:2px">кабинет на сайте</span></div>
<div class="t" style="left:264px;top:523.08px;font-size:8.9px;line-height:10.68px;color:#6a6d73;font-weight:400;">14.12.2021 sitemanager1</div>
<svg class="a" style="left:371.5px;top:525.3px;" width="10.5" height="6.5" viewBox="0 0 10.5 6.5"><path d="M0 3.25C1.5 1 3.3 0 5.25 0S9 1 10.5 3.25C9 5.5 7.2 6.5 5.25 6.5S1.5 5.5 0 3.25z" fill="#4f62b8"/><circle cx="5.25" cy="3.25" r="2" fill="#c8d2f4"/><circle cx="5.25" cy="3.25" r="1.1" fill="#4f62b8"/></svg>
<div class="t" style="left:399.8px;top:483.20px;font-size:9.3px;line-height:11.16px;color:#6a73b4;font-weight:400;"><span style="background:linear-gradient(to right,#6d8a98 52%,transparent 0) repeat-x 0 100%/4.1px 1.2px;padding-bottom:2px">chto-takoe-lichnye-kabinet-</span></div>
<div class="t" style="left:399.8px;top:497.30px;font-size:9.3px;line-height:11.16px;color:#6a73b4;font-weight:400;"><span style="background:linear-gradient(to right,#6d8a98 52%,transparent 0) repeat-x 0 100%/4.1px 1.2px;padding-bottom:2px">na-sayte--kak-sozdat-lichny-</span></div>
<div class="t" style="left:399.8px;top:511.40px;font-size:9.3px;line-height:11.16px;color:#6a73b4;font-weight:400;"><span style="background:linear-gradient(to right,#6d8a98 52%,transparent 0) repeat-x 0 100%/4.1px 1.2px;padding-bottom:2px">kabinet-na-sayte</span></div>
<svg class="a" style="left:534.8px;top:483.3px;" width="11" height="10" viewBox="0 0 11 10"><rect x="0.9" y="1.9" width="6.6" height="6.6" fill="none" stroke="#5366b8" stroke-width="1.4"/><path d="M3.6 6.4L9.6 0.6" stroke="#f6f8fc" stroke-width="3.4"/><path d="M3.6 6.4L9.4 0.8" stroke="#5366c4" stroke-width="1.9" stroke-linecap="round"/></svg>
<svg class="a" style="left:603.9px;top:483.3px;" width="11" height="10" viewBox="0 0 11 10"><rect x="0.9" y="1.9" width="6.6" height="6.6" fill="none" stroke="#5366b8" stroke-width="1.4"/><path d="M3.6 6.4L9.6 0.6" stroke="#f6f8fc" stroke-width="3.4"/><path d="M3.6 6.4L9.4 0.8" stroke="#5366c4" stroke-width="1.9" stroke-linecap="round"/></svg>
<svg class="a" style="left:680.7px;top:483.3px;" width="11" height="10" viewBox="0 0 11 10"><rect x="0.9" y="1.9" width="6.6" height="6.6" fill="none" stroke="#5366b8" stroke-width="1.4"/><path d="M3.6 6.4L9.6 0.6" stroke="#f6f8fc" stroke-width="3.4"/><path d="M3.6 6.4L9.4 0.8" stroke="#5366c4" stroke-width="1.9" stroke-linecap="round"/></svg>
<svg class="a" style="left:697.3px;top:483.3px;" width="11" height="10" viewBox="0 0 11 10"><rect x="0.9" y="1.9" width="6.6" height="6.6" fill="none" stroke="#5366b8" stroke-width="1.4"/><path d="M3.6 6.4L9.6 0.6" stroke="#f6f8fc" stroke-width="3.4"/><path d="M3.6 6.4L9.4 0.8" stroke="#5366c4" stroke-width="1.9" stroke-linecap="round"/></svg>
<div class="t" style="left:790.7px;top:483.58px;font-size:8.9px;line-height:10.68px;color:#43464c;font-weight:400;">14.12.2021</div>
<div class="t" style="left:790.7px;top:497.88px;font-size:8.9px;line-height:10.68px;color:#43464c;font-weight:400;">sitemanager1</div>
<div class="a" style="left:865.4px;top:489.1px;width:47px;height:19.5px;background:#4a6fdc;border-radius:3px"></div>
<svg class="a" style="left:882.9px;top:492.3px;" width="13" height="12" viewBox="0 0 13 12"><path d="M6.5 0L12.2 5.3H8.7v4.2H4.3V5.3H.8z" fill="#fff"/><rect x="0.3" y="8.3" width="12.4" height="3.4" rx=".5" fill="#fff"/><rect x="3.5" y="7.8" width="6" height="1.4" fill="#4a6fdc"/></svg>
<div class="a" style="left:865.9px;top:513.3px;width:46px;height:26.5px;background:#fff;border:1px solid #e9ebef;border-radius:3px"></div>
<div class="a" style="left:877.4px;top:519px;width:24px;height:8px;background:linear-gradient(90deg,#4a6fdc 0,#4a6fdc 13%,transparent 13%),repeating-linear-gradient(#f6f7f9 0,#f6f7f9 2px,#dfe2e8 2px,#dfe2e8 3px);height:11px"></div>
<div class="a" style="left:920px;top:489.1px;width:47px;height:19.5px;background:#4a6fdc;border-radius:3px"></div>
<svg class="a" style="left:937.5px;top:492.3px;" width="13" height="12" viewBox="0 0 13 12"><path d="M6.5 0L12.2 5.3H8.7v4.2H4.3V5.3H.8z" fill="#fff"/><rect x="0.3" y="8.3" width="12.4" height="3.4" rx=".5" fill="#fff"/><rect x="3.5" y="7.8" width="6" height="1.4" fill="#4a6fdc"/></svg>
<div class="a" style="left:920.5px;top:513.3px;width:46px;height:26.5px;background:#fff;border:1px solid #e9ebef;border-radius:3px"></div>
<div class="a" style="left:932px;top:519px;width:24px;height:8px;background:linear-gradient(90deg,#4a6fdc 0,#4a6fdc 13%,transparent 13%),repeating-linear-gradient(#f6f7f9 0,#f6f7f9 2px,#dfe2e8 2px,#dfe2e8 3px);height:11px"></div>
<div class="a" style="left:975.8px;top:481.3px;width:61.6px;height:26.7px;background:#2bc384;border-radius:5px"></div>
<div class="a" style="left:1026.5px;top:482.2px;width:9.7px;height:25px;background:#fff;border-radius:5px"></div>
<div class="t" style="left:994.5px;top:488.17px;font-size:12.5px;line-height:15.0px;color:#f2fff8;font-weight:400;-webkit-text-stroke:0.25px #f2fff8">Да</div>
<div class="t" style="left:1060px;top:482.91px;font-size:9.6px;line-height:11.52px;color:#6a73b4;font-weight:400;"><span style="background:linear-gradient(to right,#6d8a98 52%,transparent 0) repeat-x 0 100%/4.1px 1.2px;padding-bottom:2px">19</span></div>
<svg class="a" style="left:1130.8px;top:483.2px;" width="9" height="9.5" viewBox="0 0 9 9.5"><rect x="0" y="1" width="9" height="1.6" fill="#5a78d6"/><rect x="3" y="0" width="3" height="1.5" fill="#5a78d6"/><path d="M1 3.2h7v5.3a1 1 0 0 1-1 1H2a1 1 0 0 1-1-1z" fill="#5a78d6"/><path d="M3.3 4.5v3.8M5.7 4.5v3.8" stroke="#8aa0e6" stroke-width="0.7"/></svg>
<div class="t" style="left:194px;top:550.22px;font-size:9.8px;line-height:11.76px;color:#4a4d53;font-weight:400;">19</div>
<div class="t" style="left:211.3px;top:551.10px;font-size:9.4px;line-height:11.28px;color:#5b6b8c;font-weight:400;"><span style="border-bottom:1.5px solid #7b8ca0;padding-bottom:1px">6</span></div>
<svg class="a" style="left:263.4px;top:553.7px;" width="8" height="7.5" viewBox="0 0 8 7.5"><path d="M4 0v7.5M0 3.75h8" stroke="#4a6fdc" stroke-width="1.8"/></svg>
<div class="t" style="left:274.7px;top:551.24px;font-size:9.25px;line-height:11.1px;color:#6a73b4;font-weight:400;"><span style="background:linear-gradient(to right,#6d8a98 52%,transparent 0) repeat-x 0 100%/4.1px 1.2px;padding-bottom:2px">Терминал пользователя в</span></div>
<div class="t" style="left:263.6px;top:565.34px;font-size:9.25px;line-height:11.1px;color:#6a73b4;font-weight:400;"><span style="background:linear-gradient(to right,#6d8a98 52%,transparent 0) repeat-x 0 100%/4.1px 1.2px;padding-bottom:2px">личном кабинете</span></div>
<div class="t" style="left:264px;top:576.98px;font-size:8.9px;line-height:10.68px;color:#6a6d73;font-weight:400;">14.12.2021 sitemanager1</div>
<svg class="a" style="left:371.5px;top:579.1999999999999px;" width="10.5" height="6.5" viewBox="0 0 10.5 6.5"><path d="M0 3.25C1.5 1 3.3 0 5.25 0S9 1 10.5 3.25C9 5.5 7.2 6.5 5.25 6.5S1.5 5.5 0 3.25z" fill="#4f62b8"/><circle cx="5.25" cy="3.25" r="2" fill="#c8d2f4"/><circle cx="5.25" cy="3.25" r="1.1" fill="#4f62b8"/></svg>
<div class="t" style="left:399.8px;top:551.20px;font-size:9.3px;line-height:11.16px;color:#6a73b4;font-weight:400;"><span style="background:linear-gradient(to right,#6d8a98 52%,transparent 0) repeat-x 0 100%/4.1px 1.2px;padding-bottom:2px">terminal-polzovatelya-v-</span></div>
<div class="t" style="left:399.8px;top:565.30px;font-size:9.3px;line-height:11.16px;color:#6a73b4;font-weight:400;"><span style="background:linear-gradient(to right,#6d8a98 52%,transparent 0) repeat-x 0 100%/4.1px 1.2px;padding-bottom:2px">lichnom-kabinete</span></div>
<svg class="a" style="left:534.8px;top:551.3px;" width="11" height="10" viewBox="0 0 11 10"><rect x="0.9" y="1.9" width="6.6" height="6.6" fill="none" stroke="#5366b8" stroke-width="1.4"/><path d="M3.6 6.4L9.6 0.6" stroke="#f6f8fc" stroke-width="3.4"/><path d="M3.6 6.4L9.4 0.8" stroke="#5366c4" stroke-width="1.9" stroke-linecap="round"/></svg>
<svg class="a" style="left:603.9px;top:551.3px;" width="11" height="10" viewBox="0 0 11 10"><rect x="0.9" y="1.9" width="6.6" height="6.6" fill="none" stroke="#5366b8" stroke-width="1.4"/><path d="M3.6 6.4L9.6 0.6" stroke="#f6f8fc" stroke-width="3.4"/><path d="M3.6 6.4L9.4 0.8" stroke="#5366c4" stroke-width="1.9" stroke-linecap="round"/></svg>
<svg class="a" style="left:680.7px;top:551.3px;" width="11" height="10" viewBox="0 0 11 10"><rect x="0.9" y="1.9" width="6.6" height="6.6" fill="none" stroke="#5366b8" stroke-width="1.4"/><path d="M3.6 6.4L9.6 0.6" stroke="#f6f8fc" stroke-width="3.4"/><path d="M3.6 6.4L9.4 0.8" stroke="#5366c4" stroke-width="1.9" stroke-linecap="round"/></svg>
<svg class="a" style="left:697.3px;top:551.3px;" width="11" height="10" viewBox="0 0 11 10"><rect x="0.9" y="1.9" width="6.6" height="6.6" fill="none" stroke="#5366b8" stroke-width="1.4"/><path d="M3.6 6.4L9.6 0.6" stroke="#f6f8fc" stroke-width="3.4"/><path d="M3.6 6.4L9.4 0.8" stroke="#5366c4" stroke-width="1.9" stroke-linecap="round"/></svg>
<div class="t" style="left:790.7px;top:551.58px;font-size:8.9px;line-height:10.68px;color:#43464c;font-weight:400;">14.12.2021</div>
<div class="t" style="left:790.7px;top:565.88px;font-size:8.9px;line-height:10.68px;color:#43464c;font-weight:400;">sitemanager1</div>
<div class="a" style="left:865.4px;top:557.1px;width:47px;height:19.5px;background:#4a6fdc;border-radius:3px"></div>
<svg class="a" style="left:882.9px;top:560.3px;" width="13" height="12" viewBox="0 0 13 12"><path d="M6.5 0L12.2 5.3H8.7v4.2H4.3V5.3H.8z" fill="#fff"/><rect x="0.3" y="8.3" width="12.4" height="3.4" rx=".5" fill="#fff"/><rect x="3.5" y="7.8" width="6" height="1.4" fill="#4a6fdc"/></svg>
<div class="a" style="left:865.9px;top:581.3px;width:46px;height:26.5px;background:#fff;border:1px solid #e9ebef;border-radius:3px"></div>
<div class="a" style="left:877.4px;top:587px;width:24px;height:8px;background:#4e5358;height:20px"></div>
<div class="a" style="left:920px;top:557.1px;width:47px;height:19.5px;background:#4a6fdc;border-radius:3px"></div>
<svg class="a" style="left:937.5px;top:560.3px;" width="13" height="12" viewBox="0 0 13 12"><path d="M6.5 0L12.2 5.3H8.7v4.2H4.3V5.3H.8z" fill="#fff"/><rect x="0.3" y="8.3" width="12.4" height="3.4" rx=".5" fill="#fff"/><rect x="3.5" y="7.8" width="6" height="1.4" fill="#4a6fdc"/></svg>
<div class="a" style="left:920.5px;top:581.3px;width:46px;height:26.5px;background:#fff;border:1px solid #e9ebef;border-radius:3px"></div>
<div class="a" style="left:932px;top:587px;width:24px;height:8px;background:#4e5358;height:20px"></div>
<div class="a" style="left:975.8px;top:549.3px;width:61.6px;height:26.7px;background:#2bc384;border-radius:5px"></div>
<div class="a" style="left:1026.5px;top:550.2px;width:9.7px;height:25px;background:#fff;border-radius:5px"></div>
<div class="t" style="left:994.5px;top:556.17px;font-size:12.5px;line-height:15.0px;color:#f2fff8;font-weight:400;-webkit-text-stroke:0.25px #f2fff8">Да</div>
<div class="t" style="left:1060px;top:550.91px;font-size:9.6px;line-height:11.52px;color:#6a73b4;font-weight:400;"><span style="background:linear-gradient(to right,#6d8a98 52%,transparent 0) repeat-x 0 100%/4.1px 1.2px;padding-bottom:2px">17,18</span></div>
<svg class="a" style="left:1130.8px;top:551.2px;" width="9" height="9.5" viewBox="0 0 9 9.5"><rect x="0" y="1" width="9" height="1.6" fill="#5a78d6"/><rect x="3" y="0" width="3" height="1.5" fill="#5a78d6"/><path d="M1 3.2h7v5.3a1 1 0 0 1-1 1H2a1 1 0 0 1-1-1z" fill="#5a78d6"/><path d="M3.3 4.5v3.8M5.7 4.5v3.8" stroke="#8aa0e6" stroke-width="0.7"/></svg>
<svg class="a" style="left:193.5px;top:52.8px;" width="10" height="10" viewBox="0 0 10 10"><path d="M9.90 3.99L9.90 6.01L8.84 6.12L8.51 6.93L9.18 7.75L7.75 9.18L6.93 8.51L6.12 8.84L6.01 9.90L3.99 9.90L3.88 8.84L3.07 8.51L2.25 9.18L0.82 7.75L1.49 6.93L1.16 6.12L0.10 6.01L0.10 3.99L1.16 3.88L1.49 3.07L0.82 2.25L2.25 0.82L3.07 1.49L3.88 1.16L3.99 0.10L6.01 0.10L6.12 1.16L6.93 1.49L7.75 0.82L9.18 2.25L8.51 3.07L8.84 3.88z" fill="#2d2f33"/><circle cx="5.0" cy="5.0" r="1.60" fill="#f9fafd"/></svg>
<svg class="a" style="left:202.8px;top:52.2px;" width="5.5" height="5.5" viewBox="0 0 5.5 5.5"><path d="M5.40 2.01L5.40 3.49L4.80 3.56L4.47 4.12L4.71 4.67L3.43 5.41L3.07 4.93L2.43 4.93L2.07 5.41L0.79 4.67L1.03 4.12L0.70 3.56L0.10 3.49L0.10 2.01L0.70 1.94L1.03 1.38L0.79 0.83L2.07 0.09L2.43 0.57L3.07 0.57L3.43 0.09L4.71 0.83L4.47 1.38L4.80 1.94z" fill="#2d2f33"/><circle cx="2.75" cy="2.75" r="1.21" fill="#f9fafd"/></svg>
<svg class="a" style="left:202.8px;top:58px;" width="5.5" height="5.5" viewBox="0 0 5.5 5.5"><path d="M5.40 2.01L5.40 3.49L4.80 3.56L4.47 4.12L4.71 4.67L3.43 5.41L3.07 4.93L2.43 4.93L2.07 5.41L0.79 4.67L1.03 4.12L0.70 3.56L0.10 3.49L0.10 2.01L0.70 1.94L1.03 1.38L0.79 0.83L2.07 0.09L2.43 0.57L3.07 0.57L3.43 0.09L4.71 0.83L4.47 1.38L4.80 1.94z" fill="#2d2f33"/><circle cx="2.75" cy="2.75" r="1.21" fill="#f9fafd"/></svg>
<svg class="a" style="left:974.5px;top:51px;" width="9" height="12.5" viewBox="0 0 9 12.5"><path d="M5.5 0L1 7h3.2L2.8 12.5 8 5H4.8L6.8 0z" fill="#f5bd3c"/></svg>
<svg class="a" style="left:1013px;top:50.5px;" width="12" height="13.5" viewBox="0 0 12 13.5"><path d="M6 1.2c-2.3 0-3.8 1.8-3.8 4.3v3L.8 10.5h10.4L9.8 8.5v-3C9.8 3 8.3 1.2 6 1.2z" fill="#d3d8e6"/><circle cx="6" cy="12" r="1.4" fill="#d3d8e6"/><rect x="5.2" y="0" width="1.6" height="2" fill="#d3d8e6"/></svg>
<svg class="a" style="left:1053px;top:53px;" width="13" height="9.5" viewBox="0 0 13 9.5"><rect x="0" y="0" width="13" height="9.5" rx="1" fill="#d3d8e6"/><path d="M0 1.2l6.5 4 6.5-4" fill="none" stroke="#fff" stroke-width="0.9"/></svg>
<div class="a" style="left:1092.5px;top:42px;width:1px;height:31px;background:#edf0f4"></div>
<div class="a" style="left:1114.5px;top:45.5px;width:25px;height:25px;border-radius:50%;overflow:hidden;background:linear-gradient(#dfeaf0 0,#c9dce6 22%,#2f4a22 34%,#4d6e30 48%,#7c9a56 62%,#5a7a3a 80%,#3a5224 100%)"><div class="a" style="left:8.5px;top:9px;width:9px;height:16px;border-radius:45% 45% 10% 10%;background:linear-gradient(#a0706a,#c89890 50%,#8a6050)"></div><div class="a" style="left:9.5px;top:3.5px;width:6px;height:8px;border-radius:50% 50% 30% 30%;background:#9a7064"></div><div class="a" style="left:9px;top:20px;width:8px;height:5px;background:#d8c8b0"></div></div>
<svg class="a" style="left:389.8px;top:167.5px;" width="11.2" height="11.2" viewBox="0 0 11.2 11.2"><path d="M5.75 0v11.5M0 5.75h11.5" stroke="#fff" stroke-width="2.6"/></svg>
<svg class="a" style="left:491.5px;top:201.5px;" width="12" height="12" viewBox="0 0 12 12"><circle cx="5" cy="5" r="3.6" fill="none" stroke="#fff" stroke-width="2"/><path d="M7.6 7.6l3.4 3.4" stroke="#fff" stroke-width="2.4" stroke-linecap="round"/></svg>
<svg class="a" style="left:526.5px;top:201px;" width="18" height="16" viewBox="0 0 18 16"><path d="M0 0h11L7 5.5V11L4.5 12.5V5.5z" fill="#2f3136"/><path d="M9.5 9l6 6M15.5 9l-6 6" stroke="#e0262f" stroke-width="1.8"/></svg>
<svg class="a" style="left:561px;top:203px;" width="11" height="10" viewBox="0 0 11 10"><path d="M0 1h11M0 5h11M0 9h11" stroke="#2f3136" stroke-width="1.8"/></svg>
<div class="a" style="left:201.5px;top:201px;width:1px;height:16px;background:#333"></div>
<div class="t" style="left:203.5px;top:202.12px;font-size:11.5px;line-height:13.8px;color:#c9ccd2;font-weight:400;">Поиск</div>
<svg class="a" style="left:1145px;top:231.5px;" width="10" height="7" viewBox="0 0 10 7"><path d="M4.5 .5L1.2 3.5 4.5 6.5M9 .5L5.7 3.5 9 6.5" fill="none" stroke="#7482d4" stroke-width="1.6"/></svg>
<div class="a" style="left:1140.3px;top:244.4px;width:20px;height:45.5px;background:#fff;border:1px solid #eef0f4;border-radius:2px"></div>
<div class="a" style="left:1141px;top:266px;width:19px;height:1px;background:#eef0f4"></div>
<svg class="a" style="left:1142px;top:250.5px;" width="10" height="10" viewBox="0 0 10 10"><path d="M9.90 3.99L9.90 6.01L8.84 6.12L8.51 6.93L9.18 7.75L7.75 9.18L6.93 8.51L6.12 8.84L6.01 9.90L3.99 9.90L3.88 8.84L3.07 8.51L2.25 9.18L0.82 7.75L1.49 6.93L1.16 6.12L0.10 6.01L0.10 3.99L1.16 3.88L1.49 3.07L0.82 2.25L2.25 0.82L3.07 1.49L3.88 1.16L3.99 0.10L6.01 0.10L6.12 1.16L6.93 1.49L7.75 0.82L9.18 2.25L8.51 3.07L8.84 3.88z" fill="#7c8cd0"/><circle cx="5.0" cy="5.0" r="1.60" fill="#fff"/></svg>
<svg class="a" style="left:1151.5px;top:248.5px;" width="6" height="6" viewBox="0 0 6 6"><path d="M5.89 2.19L5.89 3.81L5.23 3.88L4.88 4.49L5.14 5.10L3.75 5.91L3.35 5.37L2.65 5.37L2.25 5.91L0.86 5.10L1.12 4.49L0.77 3.88L0.11 3.81L0.11 2.19L0.77 2.12L1.12 1.51L0.86 0.90L2.25 0.09L2.65 0.63L3.35 0.63L3.75 0.09L5.14 0.90L4.88 1.51L5.23 2.12z" fill="#7c8cd0"/><circle cx="3.0" cy="3.0" r="1.32" fill="#fff"/></svg>
<svg class="a" style="left:1151.5px;top:254.8px;" width="6" height="6" viewBox="0 0 6 6"><path d="M5.89 2.19L5.89 3.81L5.23 3.88L4.88 4.49L5.14 5.10L3.75 5.91L3.35 5.37L2.65 5.37L2.25 5.91L0.86 5.10L1.12 4.49L0.77 3.88L0.11 3.81L0.11 2.19L0.77 2.12L1.12 1.51L0.86 0.90L2.25 0.09L2.65 0.63L3.35 0.63L3.75 0.09L5.14 0.90L4.88 1.51L5.23 2.12z" fill="#7c8cd0"/><circle cx="3.0" cy="3.0" r="1.32" fill="#fff"/></svg>
<svg class="a" style="left:1146px;top:272px;" width="11.5" height="12" viewBox="0 0 11.5 12"><circle cx="5.75" cy="3" r="2.9" fill="#8096d8"/><path d="M0 12c0-3.8 2-6 5.75-6S11.5 8.2 11.5 12z" fill="#8096d8"/></svg>
<svg class="a" style="left:1096px;top:532.5px;" width="47" height="46" viewBox="0 0 47 46"><path d="M23.5 0C6 0 0 6 0 23s6 23 23.5 23S47 40 47 23 41 0 23.5 0z" fill="#4169e1"/><path d="M23 8.5C12 8.5 9 11.5 9 23s3 14.5 14 14.5c3 0 5-.3 7-.8 6-1.5 8-5 8-13.7 0-11.5-4-14.5-15-14.5z" fill="#fff"/><circle cx="23" cy="20" r="2.2" fill="#4169e1"/><circle cx="23" cy="27" r="2.2" fill="#4169e1"/></svg>
<div class="a" style="left:1129px;top:531px;width:15.5px;height:15.5px;background:#d9091c;border-radius:50%"></div>
<div class="t" style="left:1134.3px;top:534.43px;font-size:8px;line-height:9.6px;color:#fff;font-weight:700;">4</div>
</body></html>
